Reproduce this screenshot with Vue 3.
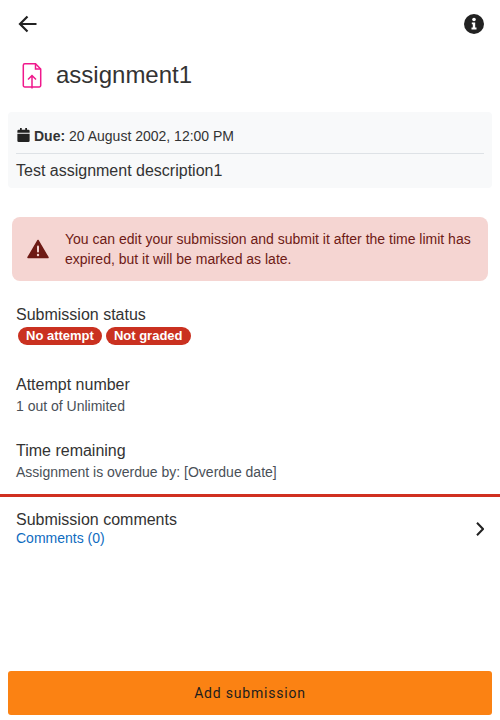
<script setup>
const rows = [
  { title: 'Attempt number', text: '1 out of Unlimited' },
  { title: 'Time remaining', text: 'Assignment is overdue by: [Overdue date]' }
]
</script>

<template>
  <div class="page">
    <header class="toolbar">
      <button class="icon-btn">
        <svg width="24" height="24" viewBox="0 0 24 24" fill="none" stroke="#222" stroke-width="2.200"><path d="M20.500 12H4.500M11.500 4.500 4 12l7.500 7.500"/></svg>
      </button>
      <button class="icon-btn">
        <svg width="20" height="20" viewBox="0 0 20 20"><circle cx="10" cy="10" r="10" fill="#222"/><circle cx="10" cy="5.500" r="1.800" fill="#fff"/><path d="M7.800 8.500H11.200V13.500H12.500V15.500H7.500V13.500H8.800V10.300H7.800Z" fill="#fff"/></svg>
      </button>
    </header>

    <div class="title-row">
      <svg class="file-icon" width="24" height="28" viewBox="0 0 24 28" fill="none" stroke="#f0188c" stroke-width="1.500">
        <path d="M7 1.800H15.500L20.700 7V23.500A1.500 1.500 0 0 1 19.200 25H4.800A1.500 1.500 0 0 1 3.300 23.500V3.300A1.500 1.500 0 0 1 4.800 1.800H7"/>
        <path d="M15.500 1.800V7H20.700"/>
        <path d="M12 26.500V13.500M8 17.500 12 13.500 16 17.500"/>
      </svg>
      <h1>assignment1</h1>
    </div>

    <section class="info-box">
      <div class="due">
        <svg width="13" height="14" viewBox="0 0 14 16" fill="#222"><path d="M3 0H5V2H9V0H11V2H12.500A1.500 1.500 0 0 1 14 3.500V5.500H0V3.500A1.500 1.500 0 0 1 1.500 2H3ZM0 6.500H14V14.500A1.500 1.500 0 0 1 12.500 16H1.500A1.500 1.500 0 0 1 0 14.500Z"/></svg>
        <span><strong>Due:</strong> 20 August 2002, 12:00 PM</span>
      </div>
      <p class="desc">Test assignment description1</p>
    </section>

    <div class="alert">
      <svg width="22" height="20" viewBox="0 0 22 20"><path d="M11 1.500 21 18.500H1Z" fill="#6e1a15" stroke="#6e1a15" stroke-width="1.500" stroke-linejoin="round"/><rect x="10" y="6.500" width="2" height="7" rx="1" fill="#f5d5d2"/><circle cx="11" cy="16" r="1.200" fill="#f5d5d2"/></svg>
      <p>You can edit your submission and submit it after the time limit has expired, but it will be marked as late.</p>
    </div>

    <div class="status">
      <div class="row-title">Submission status</div>
      <div class="badges">
        <span class="badge">No attempt</span>
        <span class="badge">Not graded</span>
      </div>
    </div>

    <div class="row" v-for="row in rows" :key="row.title">
      <div class="row-title">{{ row.title }}</div>
      <div class="row-text">{{ row.text }}</div>
    </div>

    <div class="comments">
      <div>
        <div class="row-title">Submission comments</div>
        <div class="link">Comments (0)</div>
      </div>
      <svg width="8" height="14" viewBox="0 0 8 14" fill="none" stroke="#222" stroke-width="2"><path d="M1 .7 7 7 1 13.300"/></svg>
    </div>

    <button class="submit">Add submission</button>
  </div>
</template>

<style>
body { background: #fff; }
</style>

<style scoped>
.page {
  height: 720px;
  display: flex;
  flex-direction: column;
  font-family: "Liberation Sans", Arial, sans-serif;
  color: #333;
  background: #fff;
  overflow: hidden;
}
.toolbar { height: 48px; padding: 0 16px; display: flex; justify-content: space-between; align-items: center; flex: none; }
.icon-btn { padding: 0; border: 0; background: none; display: flex; }
.title-row { display: flex; align-items: center; gap: 12px; padding: 0 20px; height: 54px; flex: none; }
.file-icon { flex: none; margin-top: 2px; }
h1 { margin: 0; font-size: 24px; font-weight: 400; color: #333; }
.info-box { margin: 10px 8px 0; padding: 15px 8px 0; height: 76px; box-sizing: border-box; background: #f8f9fa; border-radius: 4px; flex: none; }
.due { display: flex; gap: 4px; align-items: flex-start; font-size: 14px; line-height: 18px; padding-bottom: 8px; border-bottom: 1px solid #dee2e6; }
.due svg { margin: 1px 0 0 1px; flex: none; }
.due strong { font-weight: 700; }
.desc { margin: 7px 0 0; font-size: 16px; line-height: 20px; }
.alert { margin: 29px 12px 0; padding: 12px 16px 12px 15px; height: 64px; box-sizing: border-box; background: #f5d5d2; border-radius: 8px; display: flex; align-items: center; gap: 16px; color: #6e1a15; flex: none; }
.alert p { margin: 0; font-size: 14px; line-height: 20px; }
.alert svg { flex: none; }
.status { padding: 24px 16px 0; flex: none; }
.row-title { font-size: 16px; line-height: 20px; color: #333; }
.badges { display: flex; gap: 4px; padding-left: 2px; margin-top: 2px; }
.badge { background: #ca3120; color: #fff; font-size: 13px; font-weight: 700; line-height: 18px; padding: 0 8px; border-radius: 9px; }
.row { padding: 0 16px; margin-top: 30px; flex: none; }
.row + .row { margin-top: 26px; }
.row-text { font-size: 14px; line-height: 18px; margin-top: 2px; color: #495057; }
.comments { margin-top: 13px; border-top: 3px solid #d03020; padding: 13px 16px 0; display: flex; justify-content: space-between; align-items: center; flex: none; }
.link { font-size: 14px; line-height: 18px; margin-top: -1px; color: #0f6cbf; }
.submit { margin: auto 8px 5px; height: 44px; flex: none; border: 0; border-radius: 3px; background: #fb8213; color: #1d1d1d; font-family: Roboto, sans-serif; font-size: 14px; letter-spacing: 0.8px; }
</style>
